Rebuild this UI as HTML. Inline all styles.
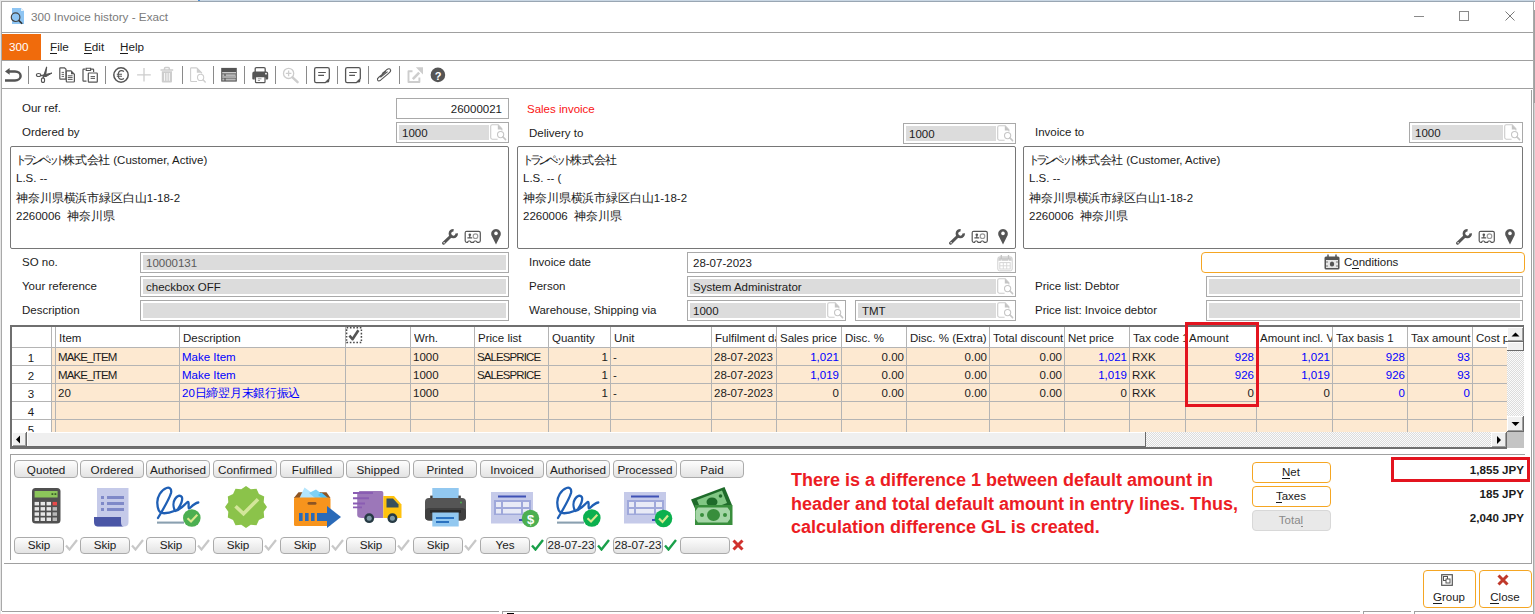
<!DOCTYPE html>
<html><head><meta charset="utf-8"><style>
html,body{margin:0;padding:0;}
body{width:1535px;height:614px;overflow:hidden;position:relative;background:#fff;font-family:"Liberation Sans",sans-serif;color:#1b1b1b;}
.a{position:absolute;}
.t{position:absolute;white-space:nowrap;line-height:20px;height:20px;}
span.c{display:inline-block;overflow:visible;text-align:left;}
u{text-decoration:none;border-bottom:1px solid currentColor;line-height:1;}
</style></head><body>
<div class="a" style="left:0px;top:0px;width:1535px;height:614px;background:#ffffff"></div>
<div class="a" style="left:0px;top:0px;width:198px;height:1px;background:#e9e9e9"></div>
<div class="a" style="left:198px;top:0px;width:2px;height:1px;background:#4a90d9"></div>
<div class="a" style="left:200px;top:0px;width:1335px;height:1px;background:#c9d7e4"></div>
<div class="a" style="left:0px;top:1px;width:200px;height:1px;background:#a9a9a9"></div>
<div class="a" style="left:200px;top:1px;width:1335px;height:1px;background:#99a6b3"></div>
<div class="a" style="left:0px;top:0px;width:1px;height:614px;background:#e6e6e6"></div>
<div class="a" style="left:1px;top:1px;width:1px;height:610px;background:#a9a9a9"></div>
<div class="a" style="left:1533px;top:1px;width:1px;height:613px;background:#a9a9a9"></div>
<div class="a" style="left:1534px;top:10px;width:1px;height:93px;background:#a0a0a0"></div>
<div class="a" style="left:1534px;top:103px;width:1px;height:511px;background:#d0d0d0"></div>
<svg class="a" style="left:10px;top:7px" width="16" height="19" viewBox="0 0 16 19"><path d="M2 1H11L14 4V17H2Z" fill="#8ec5f3"/><path d="M11 1V4H14" fill="#e6f2fc"/><circle cx="5.6" cy="10.2" r="4.3" fill="none" stroke="#444" stroke-width="1.2"/><path d="M8.7 13.4L12.2 16.8" stroke="#333" stroke-width="1.6"/></svg>
<div class="t" style="left:31px;top:7px;font-size:11.7px;color:#7a7a7a">300 Invoice history - Exact</div>
<div class="a" style="left:1414px;top:16px;width:10px;height:1px;background:#8a8a8a"></div>
<div class="a" style="left:1459px;top:11px;width:8px;height:8px;border:1px solid #8a8a8a"></div>
<svg class="a" style="left:1505px;top:11px" width="10" height="10" viewBox="0 0 10 10"><path d="M0.5 0.5L9.5 9.5M9.5 0.5L0.5 9.5" stroke="#7a7a7a" stroke-width="1"/></svg>
<div class="a" style="left:2px;top:32px;width:1531px;height:1px;background:#a0a0a0"></div>
<div class="a" style="left:2px;top:34px;width:39px;height:26px;background:#f06b0c"></div>
<div class="t" style="left:9px;top:37px;font-size:11.7px;color:#fff">300</div>
<div class="t" style="left:50px;top:37px;font-size:11.7px;"><u>F</u>ile</div>
<div class="t" style="left:84px;top:37px;font-size:11.7px;"><u>E</u>dit</div>
<div class="t" style="left:120px;top:37px;font-size:11.7px;"><u>H</u>elp</div>
<div class="a" style="left:2px;top:60px;width:1531px;height:1px;background:#a0a0a0"></div>
<div class="a" style="left:2px;top:88px;width:1531px;height:1px;background:#a0a0a0"></div>
<div class="a" style="left:28px;top:66px;width:1px;height:18px;background:#8a8a8a"></div>
<div class="a" style="left:105px;top:66px;width:1px;height:18px;background:#8a8a8a"></div>
<div class="a" style="left:182px;top:66px;width:1px;height:18px;background:#8a8a8a"></div>
<div class="a" style="left:213px;top:66px;width:1px;height:18px;background:#8a8a8a"></div>
<div class="a" style="left:244px;top:66px;width:1px;height:18px;background:#8a8a8a"></div>
<div class="a" style="left:275px;top:66px;width:1px;height:18px;background:#8a8a8a"></div>
<div class="a" style="left:306px;top:66px;width:1px;height:18px;background:#8a8a8a"></div>
<div class="a" style="left:337px;top:66px;width:1px;height:18px;background:#8a8a8a"></div>
<div class="a" style="left:368px;top:66px;width:1px;height:18px;background:#8a8a8a"></div>
<div class="a" style="left:399px;top:66px;width:1px;height:18px;background:#8a8a8a"></div>
<svg class="a" style="left:0;top:0" width="1535" height="100">
<path d="M9 71.4H15A5.6 4.5 0 0 1 15 80.4H5" fill="none" stroke="#555555" stroke-width="2.5"/>
<path d="M5 71.4L9.6 68V74.8Z" fill="#555555"/>
<ellipse cx="38.6" cy="75" rx="2.2" ry="1.5" fill="none" stroke="#555555" stroke-width="1.1"/>
<ellipse cx="43" cy="80.2" rx="1.6" ry="2.3" fill="none" stroke="#555555" stroke-width="1.1"/>
<path d="M43.2 77.6L46.6 67.2L45.8 73.5Z" fill="#555555" stroke="#555555" stroke-width="1.2" stroke-linejoin="round"/>
<path d="M40.8 75.6L52 73L46 76.6Z" fill="#555555" stroke="#555555" stroke-width="1" stroke-linejoin="round"/>
<path d="M60.5 67.8H64.5L66 69.3V79.2H60.5Q59.8 79.2 59.8 78.5V68.5Q59.8 67.8 60.5 67.8Z" fill="#fff" stroke="#555555" stroke-width="1.2"/>
<path d="M61.6 72.4H64M61.6 74.4H64M61.6 76.4H64" stroke="#555555" stroke-width="0.9"/>
<path d="M67 70.8H71L74.4 74.2V81.3Q74.4 82 73.7 82H67Q66.3 82 66.3 81.3V71.5Q66.3 70.8 67 70.8Z" fill="#fff" stroke="#555555" stroke-width="1.2"/>
<path d="M71 70.8V74.2H74.4" fill="#555555"/>
<path d="M67.8 75.8H72.6M67.8 77.6H72.6M67.8 79.4H72.6" stroke="#555555" stroke-width="1"/>
<path d="M85.5 69.2H83.6Q83 69.2 83 69.8V80.6Q83 81.2 83.6 81.2H86.5M91 69.2H93Q93.6 69.2 93.6 69.8V72" fill="none" stroke="#555555" stroke-width="1.2"/>
<path d="M86.2 68.3H90.6V70.5H86.2Z" fill="#fff" stroke="#555555" stroke-width="1.1"/>
<path d="M89 73H96.6Q97.3 73 97.3 73.7V81.5Q97.3 82.2 96.6 82.2H89Q88.3 82.2 88.3 81.5V73.7Q88.3 73 89 73Z" fill="#fff" stroke="#555555" stroke-width="1.2"/>
<path d="M90.6 76.6H95M90.6 78.4H95" stroke="#555555" stroke-width="1"/>
<circle cx="121" cy="75" r="7.2" fill="none" stroke="#555555" stroke-width="1.5"/>
<path d="M124 71.5Q122.8 70.6 121.6 70.6Q118.2 70.6 118.2 75Q118.2 79.4 121.6 79.4Q122.8 79.4 124 78.5M116.8 74.2H122M116.8 76.2H122" fill="none" stroke="#555555" stroke-width="1.1"/>
<path d="M144 67.9V81.6M137.1 74.8H150.8" stroke="#cdcdcd" stroke-width="1.3"/>
<path d="M160.5 69.9H173.2M164.5 69.9V68.4Q164.5 67.4 165.5 67.4H168.3Q169.3 67.4 169.3 68.4V69.9" fill="none" stroke="#cdcdcd" stroke-width="1.5"/>
<path d="M161.8 71.3H172V81.6Q172 82.6 171 82.6H162.8Q161.8 82.6 161.8 81.6Z" fill="#cdcdcd"/>
<path d="M164.6 73V80.8M167 73V80.8M169.3 73V80.8" stroke="#fff" stroke-width="0.9"/>
<path d="M196.8 67.9H191.3Q190.6 67.9 190.6 68.6V80.8Q190.6 81.5 191.3 81.5H197M196.8 67.9L201.6 72.7V73.5" fill="none" stroke="#cdcdcd" stroke-width="1.1"/>
<path d="M196.8 67.9V72.7H201.6Z" fill="#cdcdcd"/>
<circle cx="200.6" cy="77.4" r="3.1" fill="#fff" stroke="#cdcdcd" stroke-width="1.1"/>
<path d="M202.8 79.6L205.6 82.4" stroke="#cdcdcd" stroke-width="1.4"/>
<rect x="221.2" y="67.9" width="15.6" height="13.7" fill="#555555"/>
<path d="M222.2 72.8H236M222.2 77H236" stroke="#fff" stroke-width="1"/>
<path d="M222.3 74.2H224.4V75.9H222.3ZM225.6 74.2H235.7V75.9H225.6ZM222.3 78.5H224.4V80.6H222.3ZM225.6 78.5H235.7V80.6H225.6Z" fill="#b9b9b9"/>
<path d="M255.2 72V68.8Q255.2 67.6 256.4 67.6H264Q265.2 67.6 265.2 68.8V72" fill="none" stroke="#555555" stroke-width="1.3"/>
<path d="M254.2 71.5H266.2Q268.2 71.5 268.2 73.5V78.4Q268.2 79.4 267.2 79.4H265.6V77.5H254.8V79.4H253.2Q252.3 79.4 252.3 78.4V73.5Q252.3 71.5 254.2 71.5Z" fill="#555555"/>
<circle cx="266" cy="73.7" r="0.9" fill="#fff"/>
<path d="M255.5 76.7H265V81.9Q265 82.7 264.2 82.7H256.3Q255.5 82.7 255.5 81.9Z" fill="#fff" stroke="#555555" stroke-width="1.2"/>
<path d="M257.8 78.8H261.5M257.8 80.5H260" stroke="#9a9a9a" stroke-width="1"/>
<circle cx="288.6" cy="73.4" r="5.1" fill="none" stroke="#cdcdcd" stroke-width="1.3"/>
<path d="M288.6 70.6V76.2M285.8 73.4H291.4" stroke="#cdcdcd" stroke-width="1.3"/>
<path d="M292.5 77.3L297.6 82.2" stroke="#cdcdcd" stroke-width="2.4" stroke-linecap="round"/>
<path d="M316.2 67.6H327.6Q329.3 67.6 329.3 69.3V78.6L325.3 82.6H316.2Q314.6 82.6 314.6 80.9V69.3Q314.6 67.6 316.2 67.6Z" fill="none" stroke="#555555" stroke-width="1.3"/>
<path d="M329.3 78.6L325.3 82.6H327.6Q329.3 82.6 329.3 80.9Z" fill="#555555"/>
<path d="M318.2 72.5H325.8M318.2 75.4H324" stroke="#555555" stroke-width="1.2"/><path d="M347.2 67.6H358.6Q360.3 67.6 360.3 69.3V78.6L356.3 82.6H347.2Q345.6 82.6 345.6 80.9V69.3Q345.6 67.6 347.2 67.6Z" fill="none" stroke="#555555" stroke-width="1.3"/>
<path d="M360.3 78.6L356.3 82.6H358.6Q360.3 82.6 360.3 80.9Z" fill="#555555"/>
<path d="M349.2 72.5H356.8M349.2 75.4H355" stroke="#555555" stroke-width="1.2"/>
<path d="M382 73.6L386.6 69.8Q389.4 67.8 390.4 69.6Q391.4 71.2 388.6 73.4L380.6 80.2Q378.6 81.6 377.6 80.2Q376.8 78.8 378.8 77.2L386 71.4M380.4 77.4L387.6 71.6" fill="none" stroke="#555555" stroke-width="1.1" stroke-linejoin="round"/>
<path d="M412.5 71.3H408.5V82H419.4V77.5" fill="none" stroke="#cdcdcd" stroke-width="1.9" stroke-linejoin="round"/>
<path d="M412.8 79.2L419.2 72.6" stroke="#cdcdcd" stroke-width="2.6"/>
<path d="M415.8 67.2H423V74.4Z" fill="#cdcdcd"/>
<circle cx="437.9" cy="74.9" r="7.3" fill="#555555"/>
</svg>
<div class="t" style="left:238px;width:400px;text-align:center;top:66px;font-size:11px;color:#fff;font-weight:bold">?</div>
<div class="t" style="left:22px;top:98px;font-size:11.5px;">Our ref.</div>
<div class="t" style="left:22px;top:122px;font-size:11.5px;">Ordered by</div>
<div class="a" style="left:396px;top:98px;width:111px;height:19px;border:1px solid #a9a9a9;background:#fff"></div>
<div class="t" style="left:102px;width:400px;text-align:right;top:99px;font-size:11.5px;">26000021</div>
<div class="a" style="left:396px;top:122px;width:111px;height:19px;border:1px solid #a9a9a9;background:#fff"></div>
<div class="a" style="left:399px;top:125px;width:90px;height:15px;background:#dcdcdc"></div>
<svg class="a" style="left:489px;top:123px" width="18" height="18" viewBox="0 0 18 18"><path d="M12.9 7.6V5.6L9.2 1.7H3.3Q1.7 1.7 1.7 3.3V14.6Q1.7 16.2 3.3 16.2H8.6" fill="none" stroke="#cbcbcb" stroke-width="1.1"/><path d="M8.8 1.6L13 5.9V6.5H8.8Z" fill="#c4c4c4"/><circle cx="11.6" cy="11.6" r="3.1" fill="#fff" stroke="#c6c6c6" stroke-width="1.1"/><path d="M13.9 13.9L16.6 16.6" stroke="#c6c6c6" stroke-width="1.5" stroke-linecap="round"/></svg>
<div class="t" style="left:402px;top:123px;font-size:11.5px;">1000</div>
<div class="t" style="left:527px;top:99px;font-size:11.5px;color:#fa1414">Sales invoice</div>
<div class="t" style="left:529px;top:123px;font-size:11.5px;">Delivery to</div>
<div class="a" style="left:903px;top:123px;width:111px;height:19px;border:1px solid #a9a9a9;background:#fff"></div>
<div class="a" style="left:906px;top:126px;width:90px;height:15px;background:#dcdcdc"></div>
<svg class="a" style="left:996px;top:124px" width="18" height="18" viewBox="0 0 18 18"><path d="M12.9 7.6V5.6L9.2 1.7H3.3Q1.7 1.7 1.7 3.3V14.6Q1.7 16.2 3.3 16.2H8.6" fill="none" stroke="#cbcbcb" stroke-width="1.1"/><path d="M8.8 1.6L13 5.9V6.5H8.8Z" fill="#c4c4c4"/><circle cx="11.6" cy="11.6" r="3.1" fill="#fff" stroke="#c6c6c6" stroke-width="1.1"/><path d="M13.9 13.9L16.6 16.6" stroke="#c6c6c6" stroke-width="1.5" stroke-linecap="round"/></svg>
<div class="t" style="left:909px;top:124px;font-size:11.5px;">1000</div>
<div class="t" style="left:1035px;top:122px;font-size:11.5px;">Invoice to</div>
<div class="a" style="left:1409px;top:122px;width:112px;height:19px;border:1px solid #a9a9a9;background:#fff"></div>
<div class="a" style="left:1412px;top:125px;width:91px;height:15px;background:#dcdcdc"></div>
<svg class="a" style="left:1503px;top:123px" width="18" height="18" viewBox="0 0 18 18"><path d="M12.9 7.6V5.6L9.2 1.7H3.3Q1.7 1.7 1.7 3.3V14.6Q1.7 16.2 3.3 16.2H8.6" fill="none" stroke="#cbcbcb" stroke-width="1.1"/><path d="M8.8 1.6L13 5.9V6.5H8.8Z" fill="#c4c4c4"/><circle cx="11.6" cy="11.6" r="3.1" fill="#fff" stroke="#c6c6c6" stroke-width="1.1"/><path d="M13.9 13.9L16.6 16.6" stroke="#c6c6c6" stroke-width="1.5" stroke-linecap="round"/></svg>
<div class="t" style="left:1415px;top:123px;font-size:11.5px;">1000</div>
<div class="a" style="left:10px;top:146px;width:497px;height:101px;border:1px solid #767676;border-radius:2px;background:#fff"></div>
<div class="t" style="left:16px;top:150px;font-size:11.5px;"><span style="margin-left:-1.5px"></span><span class="c" style="width:8.15px">ト</span><span class="c" style="width:8.15px">ラ</span><span class="c" style="width:8.15px">ン</span><span class="c" style="width:8.15px">ペ</span><span class="c" style="width:8.15px">ッ</span><span class="c" style="width:8.15px">ト</span><span class="c" style="width:11.7px">株</span><span class="c" style="width:11.7px">式</span><span class="c" style="width:11.7px">会</span><span class="c" style="width:11.7px">社</span> (Customer, Active)</div>
<div class="t" style="left:16px;top:168px;font-size:11.5px;">L.S. --</div>
<div class="t" style="left:16px;top:187.5px;font-size:11.5px;"><span class="c" style="width:11.9px">神</span><span class="c" style="width:11.9px">奈</span><span class="c" style="width:11.9px">川</span><span class="c" style="width:11.9px">県</span><span class="c" style="width:11.9px">横</span><span class="c" style="width:11.9px">浜</span><span class="c" style="width:11.9px">市</span><span class="c" style="width:11.9px">緑</span><span class="c" style="width:11.9px">区</span><span class="c" style="width:11.9px">白</span><span class="c" style="width:11.9px">山</span>1-18-2</div>
<div class="t" style="left:16px;top:206px;font-size:11.5px;">2260006&nbsp; <span class="c" style="width:11.9px">神</span><span class="c" style="width:11.9px">奈</span><span class="c" style="width:11.9px">川</span><span class="c" style="width:11.9px">県</span></div>
<svg class="a" style="left:442px;top:228px" width="17" height="17" viewBox="0 0 17 17"><path d="M14.69 5.3A3.4 3.4 0 1 1 11.6 2.21" fill="none" stroke="#555" stroke-width="2.6"/><path d="M1.6 15.2L9 8" stroke="#555" stroke-width="3" stroke-linecap="round"/><circle cx="2.1" cy="14.7" r="0.7" fill="#fff"/></svg>
<svg class="a" style="left:464px;top:230px" width="18" height="14" viewBox="0 0 18 14"><path d="M2.7 1.3H14.8Q16.3 1.3 16.3 2.8V10.8Q16.3 12.3 14.8 12.3H13.2Q12.7 11 11.8 11H10.8Q10 11 9.6 12.3H7Q6.6 11 5.8 11H4.8Q4 11 3.6 12.3H2.7Q1.2 12.3 1.2 10.8V2.8Q1.2 1.3 2.7 1.3Z" fill="none" stroke="#555" stroke-width="1.2"/><circle cx="5.8" cy="4.8" r="1.3" fill="#555"/><path d="M5.2 5.5H6.4V7.2H8.2V8.4H3.4V7.2H5.2Z" fill="#555"/><circle cx="11.5" cy="6.2" r="2.3" fill="none" stroke="#9a9a9a" stroke-width="1.1"/></svg>
<svg class="a" style="left:490px;top:228px" width="12" height="17" viewBox="0 0 12 17"><path d="M6 16.5L1.5 7.5A4.8 4.8 0 1 1 10.5 7.5Z" fill="#555"/><circle cx="6" cy="5.4" r="1.8" fill="#fff"/></svg>
<div class="a" style="left:517px;top:146px;width:497px;height:101px;border:1px solid #767676;border-radius:2px;background:#fff"></div>
<div class="t" style="left:523px;top:150px;font-size:11.5px;"><span style="margin-left:-1.5px"></span><span class="c" style="width:8.15px">ト</span><span class="c" style="width:8.15px">ラ</span><span class="c" style="width:8.15px">ン</span><span class="c" style="width:8.15px">ペ</span><span class="c" style="width:8.15px">ッ</span><span class="c" style="width:8.15px">ト</span><span class="c" style="width:11.7px">株</span><span class="c" style="width:11.7px">式</span><span class="c" style="width:11.7px">会</span><span class="c" style="width:11.7px">社</span></div>
<div class="t" style="left:523px;top:168px;font-size:11.5px;">L.S. -- (</div>
<div class="t" style="left:523px;top:187.5px;font-size:11.5px;"><span class="c" style="width:11.9px">神</span><span class="c" style="width:11.9px">奈</span><span class="c" style="width:11.9px">川</span><span class="c" style="width:11.9px">県</span><span class="c" style="width:11.9px">横</span><span class="c" style="width:11.9px">浜</span><span class="c" style="width:11.9px">市</span><span class="c" style="width:11.9px">緑</span><span class="c" style="width:11.9px">区</span><span class="c" style="width:11.9px">白</span><span class="c" style="width:11.9px">山</span>1-18-2</div>
<div class="t" style="left:523px;top:206px;font-size:11.5px;">2260006&nbsp; <span class="c" style="width:11.9px">神</span><span class="c" style="width:11.9px">奈</span><span class="c" style="width:11.9px">川</span><span class="c" style="width:11.9px">県</span></div>
<svg class="a" style="left:949px;top:228px" width="17" height="17" viewBox="0 0 17 17"><path d="M14.69 5.3A3.4 3.4 0 1 1 11.6 2.21" fill="none" stroke="#555" stroke-width="2.6"/><path d="M1.6 15.2L9 8" stroke="#555" stroke-width="3" stroke-linecap="round"/><circle cx="2.1" cy="14.7" r="0.7" fill="#fff"/></svg>
<svg class="a" style="left:971px;top:230px" width="18" height="14" viewBox="0 0 18 14"><path d="M2.7 1.3H14.8Q16.3 1.3 16.3 2.8V10.8Q16.3 12.3 14.8 12.3H13.2Q12.7 11 11.8 11H10.8Q10 11 9.6 12.3H7Q6.6 11 5.8 11H4.8Q4 11 3.6 12.3H2.7Q1.2 12.3 1.2 10.8V2.8Q1.2 1.3 2.7 1.3Z" fill="none" stroke="#555" stroke-width="1.2"/><circle cx="5.8" cy="4.8" r="1.3" fill="#555"/><path d="M5.2 5.5H6.4V7.2H8.2V8.4H3.4V7.2H5.2Z" fill="#555"/><circle cx="11.5" cy="6.2" r="2.3" fill="none" stroke="#9a9a9a" stroke-width="1.1"/></svg>
<svg class="a" style="left:997px;top:228px" width="12" height="17" viewBox="0 0 12 17"><path d="M6 16.5L1.5 7.5A4.8 4.8 0 1 1 10.5 7.5Z" fill="#555"/><circle cx="6" cy="5.4" r="1.8" fill="#fff"/></svg>
<div class="a" style="left:1023px;top:146px;width:498px;height:101px;border:1px solid #767676;border-radius:2px;background:#fff"></div>
<div class="t" style="left:1029px;top:150px;font-size:11.5px;"><span style="margin-left:-1.5px"></span><span class="c" style="width:8.15px">ト</span><span class="c" style="width:8.15px">ラ</span><span class="c" style="width:8.15px">ン</span><span class="c" style="width:8.15px">ペ</span><span class="c" style="width:8.15px">ッ</span><span class="c" style="width:8.15px">ト</span><span class="c" style="width:11.7px">株</span><span class="c" style="width:11.7px">式</span><span class="c" style="width:11.7px">会</span><span class="c" style="width:11.7px">社</span> (Customer, Active)</div>
<div class="t" style="left:1029px;top:168px;font-size:11.5px;">L.S. --</div>
<div class="t" style="left:1029px;top:187.5px;font-size:11.5px;"><span class="c" style="width:11.9px">神</span><span class="c" style="width:11.9px">奈</span><span class="c" style="width:11.9px">川</span><span class="c" style="width:11.9px">県</span><span class="c" style="width:11.9px">横</span><span class="c" style="width:11.9px">浜</span><span class="c" style="width:11.9px">市</span><span class="c" style="width:11.9px">緑</span><span class="c" style="width:11.9px">区</span><span class="c" style="width:11.9px">白</span><span class="c" style="width:11.9px">山</span>1-18-2</div>
<div class="t" style="left:1029px;top:206px;font-size:11.5px;">2260006&nbsp; <span class="c" style="width:11.9px">神</span><span class="c" style="width:11.9px">奈</span><span class="c" style="width:11.9px">川</span><span class="c" style="width:11.9px">県</span></div>
<svg class="a" style="left:1456px;top:228px" width="17" height="17" viewBox="0 0 17 17"><path d="M14.69 5.3A3.4 3.4 0 1 1 11.6 2.21" fill="none" stroke="#555" stroke-width="2.6"/><path d="M1.6 15.2L9 8" stroke="#555" stroke-width="3" stroke-linecap="round"/><circle cx="2.1" cy="14.7" r="0.7" fill="#fff"/></svg>
<svg class="a" style="left:1478px;top:230px" width="18" height="14" viewBox="0 0 18 14"><path d="M2.7 1.3H14.8Q16.3 1.3 16.3 2.8V10.8Q16.3 12.3 14.8 12.3H13.2Q12.7 11 11.8 11H10.8Q10 11 9.6 12.3H7Q6.6 11 5.8 11H4.8Q4 11 3.6 12.3H2.7Q1.2 12.3 1.2 10.8V2.8Q1.2 1.3 2.7 1.3Z" fill="none" stroke="#555" stroke-width="1.2"/><circle cx="5.8" cy="4.8" r="1.3" fill="#555"/><path d="M5.2 5.5H6.4V7.2H8.2V8.4H3.4V7.2H5.2Z" fill="#555"/><circle cx="11.5" cy="6.2" r="2.3" fill="none" stroke="#9a9a9a" stroke-width="1.1"/></svg>
<svg class="a" style="left:1504px;top:228px" width="12" height="17" viewBox="0 0 12 17"><path d="M6 16.5L1.5 7.5A4.8 4.8 0 1 1 10.5 7.5Z" fill="#555"/><circle cx="6" cy="5.4" r="1.8" fill="#fff"/></svg>
<div class="t" style="left:22px;top:252px;font-size:11.5px;">SO no.</div>
<div class="t" style="left:22px;top:276px;font-size:11.5px;">Your reference</div>
<div class="t" style="left:22px;top:300px;font-size:11.5px;">Description</div>
<div class="a" style="left:140px;top:252px;width:367px;height:19px;border:1px solid #a9a9a9;background:#fff"></div>
<div class="a" style="left:143px;top:255px;width:363px;height:15px;background:#dcdcdc"></div>
<div class="t" style="left:146px;top:253px;font-size:11.5px;color:#5a5a5a">10000131</div>
<div class="a" style="left:140px;top:276px;width:367px;height:19px;border:1px solid #a9a9a9;background:#fff"></div>
<div class="a" style="left:143px;top:279px;width:363px;height:15px;background:#dcdcdc"></div>
<div class="t" style="left:146px;top:277px;font-size:11.5px;">checkbox OFF</div>
<div class="a" style="left:140px;top:300px;width:367px;height:19px;border:1px solid #a9a9a9;background:#fff"></div>
<div class="a" style="left:143px;top:303px;width:363px;height:15px;background:#dcdcdc"></div>
<div class="t" style="left:529px;top:252px;font-size:11.5px;">Invoice date</div>
<div class="t" style="left:529px;top:276px;font-size:11.5px;">Person</div>
<div class="t" style="left:529px;top:300px;font-size:11.5px;">Warehouse, Shipping via</div>
<div class="a" style="left:687px;top:252px;width:327px;height:19px;border:1px solid #a9a9a9;background:#fff"></div>
<svg class="a" style="left:996px;top:254px" width="18" height="18" viewBox="0 0 18 18"><rect x="1.8" y="2.8" width="14.4" height="14" rx="1.8" fill="#fff" stroke="#d0d0d0" stroke-width="1"/><path d="M2.3 3.3H15.7V6.8H2.3Z" fill="#cdcdcd"/><path d="M5.3 1V5.5M12.5 1V5.5" stroke="#c4c4c4" stroke-width="1.3"/><path d="M5.3 5.5V7M12.5 5.5V7" stroke="#fff" stroke-width="0.6"/><rect x="3.8" y="8.6" width="10.4" height="6.4" fill="none" stroke="#d6d6d6" stroke-width="1"/><path d="M3.8 11.8H14.2M7.3 8.6V15M10.7 8.6V15" stroke="#d6d6d6" stroke-width="0.9"/></svg>
<div class="t" style="left:693px;top:253px;font-size:11.5px;">28-07-2023</div>
<div class="a" style="left:687px;top:276px;width:327px;height:19px;border:1px solid #a9a9a9;background:#fff"></div>
<div class="a" style="left:690px;top:279px;width:306px;height:15px;background:#dcdcdc"></div>
<svg class="a" style="left:996px;top:277px" width="18" height="18" viewBox="0 0 18 18"><path d="M12.9 7.6V5.6L9.2 1.7H3.3Q1.7 1.7 1.7 3.3V14.6Q1.7 16.2 3.3 16.2H8.6" fill="none" stroke="#cbcbcb" stroke-width="1.1"/><path d="M8.8 1.6L13 5.9V6.5H8.8Z" fill="#c4c4c4"/><circle cx="11.6" cy="11.6" r="3.1" fill="#fff" stroke="#c6c6c6" stroke-width="1.1"/><path d="M13.9 13.9L16.6 16.6" stroke="#c6c6c6" stroke-width="1.5" stroke-linecap="round"/></svg>
<div class="t" style="left:693px;top:277px;font-size:11.5px;">System Administrator</div>
<div class="a" style="left:687px;top:300px;width:157px;height:19px;border:1px solid #a9a9a9;background:#fff"></div>
<div class="a" style="left:690px;top:303px;width:136px;height:15px;background:#dcdcdc"></div>
<svg class="a" style="left:826px;top:301px" width="18" height="18" viewBox="0 0 18 18"><path d="M12.9 7.6V5.6L9.2 1.7H3.3Q1.7 1.7 1.7 3.3V14.6Q1.7 16.2 3.3 16.2H8.6" fill="none" stroke="#cbcbcb" stroke-width="1.1"/><path d="M8.8 1.6L13 5.9V6.5H8.8Z" fill="#c4c4c4"/><circle cx="11.6" cy="11.6" r="3.1" fill="#fff" stroke="#c6c6c6" stroke-width="1.1"/><path d="M13.9 13.9L16.6 16.6" stroke="#c6c6c6" stroke-width="1.5" stroke-linecap="round"/></svg>
<div class="t" style="left:693px;top:301px;font-size:11.5px;">1000</div>
<div class="a" style="left:855px;top:300px;width:159px;height:19px;border:1px solid #a9a9a9;background:#fff"></div>
<div class="a" style="left:858px;top:303px;width:138px;height:15px;background:#dcdcdc"></div>
<svg class="a" style="left:996px;top:301px" width="18" height="18" viewBox="0 0 18 18"><path d="M12.9 7.6V5.6L9.2 1.7H3.3Q1.7 1.7 1.7 3.3V14.6Q1.7 16.2 3.3 16.2H8.6" fill="none" stroke="#cbcbcb" stroke-width="1.1"/><path d="M8.8 1.6L13 5.9V6.5H8.8Z" fill="#c4c4c4"/><circle cx="11.6" cy="11.6" r="3.1" fill="#fff" stroke="#c6c6c6" stroke-width="1.1"/><path d="M13.9 13.9L16.6 16.6" stroke="#c6c6c6" stroke-width="1.5" stroke-linecap="round"/></svg>
<div class="t" style="left:862px;top:301px;font-size:11.5px;">TMT</div>
<div class="t" style="left:1035px;top:276px;font-size:11.5px;">Price list: Debtor</div>
<div class="t" style="left:1035px;top:300px;font-size:11.5px;">Price list: Invoice debtor</div>
<div class="a" style="left:1201px;top:252px;width:322px;height:19px;border:1px solid #f5a623;border-radius:4px;background:#fff"></div>
<svg class="a" style="left:1324px;top:254px" width="16" height="16" viewBox="0 0 16 16"><rect x="0.5" y="2.5" width="15" height="13" rx="1.5" fill="#555"/><path d="M4 0.5V3.5M12 0.5V3.5" stroke="#555" stroke-width="1.5"/><rect x="2" y="6" width="12" height="8" fill="#e6e6e6"/><ellipse cx="8" cy="10" rx="2.2" ry="2.6" fill="#555"/><path d="M2 8H4M12 8H14M2 12H4M12 12H14" stroke="#777"/></svg>
<div class="t" style="left:1344px;top:252px;font-size:11.5px;">C<u>o</u>nditions</div>
<div class="a" style="left:1206px;top:276px;width:315px;height:19px;border:1px solid #a9a9a9;background:#fff"></div>
<div class="a" style="left:1209px;top:279px;width:311px;height:15px;background:#dcdcdc"></div>
<div class="a" style="left:1206px;top:300px;width:315px;height:19px;border:1px solid #a9a9a9;background:#fff"></div>
<div class="a" style="left:1209px;top:303px;width:311px;height:15px;background:#dcdcdc"></div>
<div class="a" style="left:10px;top:325px;width:1514px;height:2px;background:#6f6f6f"></div>
<div class="a" style="left:10px;top:325px;width:2px;height:124px;background:#6f6f6f"></div>
<div class="a" style="left:10px;top:447px;width:1497px;height:2px;background:#6f6f6f"></div>
<div class="a" style="left:12px;top:327px;width:1495px;height:20px;background:#fff"></div>
<div class="a" style="left:52px;top:348px;width:1455px;height:84px;background:#fde9d1"></div>
<div class="a" style="left:12px;top:348px;width:39px;height:84px;background:#fff"></div>
<div class="a" style="left:51px;top:327px;width:1px;height:105px;background:#b4b4b4"></div>
<div class="a" style="left:55px;top:327px;width:1px;height:105px;background:#b4b4b4"></div>
<div class="a" style="left:179px;top:327px;width:1px;height:105px;background:#b4b4b4"></div>
<div class="a" style="left:345px;top:327px;width:1px;height:105px;background:#b4b4b4"></div>
<div class="a" style="left:410px;top:327px;width:1px;height:105px;background:#b4b4b4"></div>
<div class="a" style="left:474px;top:327px;width:1px;height:105px;background:#b4b4b4"></div>
<div class="a" style="left:548px;top:327px;width:1px;height:105px;background:#b4b4b4"></div>
<div class="a" style="left:610px;top:327px;width:1px;height:105px;background:#b4b4b4"></div>
<div class="a" style="left:711px;top:327px;width:1px;height:105px;background:#b4b4b4"></div>
<div class="a" style="left:776px;top:327px;width:1px;height:105px;background:#b4b4b4"></div>
<div class="a" style="left:841px;top:327px;width:1px;height:105px;background:#b4b4b4"></div>
<div class="a" style="left:906px;top:327px;width:1px;height:105px;background:#b4b4b4"></div>
<div class="a" style="left:989px;top:327px;width:1px;height:105px;background:#b4b4b4"></div>
<div class="a" style="left:1064px;top:327px;width:1px;height:105px;background:#b4b4b4"></div>
<div class="a" style="left:1129px;top:327px;width:1px;height:105px;background:#b4b4b4"></div>
<div class="a" style="left:1185px;top:327px;width:1px;height:105px;background:#b4b4b4"></div>
<div class="a" style="left:1256px;top:327px;width:1px;height:105px;background:#b4b4b4"></div>
<div class="a" style="left:1332px;top:327px;width:1px;height:105px;background:#b4b4b4"></div>
<div class="a" style="left:1407px;top:327px;width:1px;height:105px;background:#b4b4b4"></div>
<div class="a" style="left:1472px;top:327px;width:1px;height:105px;background:#b4b4b4"></div>
<div class="a" style="left:12px;top:347px;width:1495px;height:1px;background:#b4b4b4"></div>
<div class="a" style="left:12px;top:365px;width:1495px;height:1px;background:#b4b4b4"></div>
<div class="a" style="left:12px;top:383px;width:1495px;height:1px;background:#b4b4b4"></div>
<div class="a" style="left:12px;top:401px;width:1495px;height:1px;background:#b4b4b4"></div>
<div class="a" style="left:12px;top:419px;width:1495px;height:1px;background:#b4b4b4"></div>
<div class="t" style="left:59px;top:328px;width:120px;overflow:hidden;font-size:11.5px;">Item</div>
<div class="t" style="left:183px;top:328px;width:162px;overflow:hidden;font-size:11.5px;">Description</div>
<div class="t" style="left:414px;top:328px;width:60px;overflow:hidden;font-size:11.5px;">Wrh.</div>
<div class="t" style="left:478px;top:328px;width:70px;overflow:hidden;font-size:11.5px;">Price list</div>
<div class="t" style="left:552px;top:328px;width:58px;overflow:hidden;font-size:11.5px;">Quantity</div>
<div class="t" style="left:614px;top:328px;width:97px;overflow:hidden;font-size:11.5px;">Unit</div>
<div class="t" style="left:715px;top:328px;width:61px;overflow:hidden;font-size:11.5px;">Fulfilment date</div>
<div class="t" style="left:780px;top:328px;width:61px;overflow:hidden;font-size:11.5px;">Sales price</div>
<div class="t" style="left:845px;top:328px;width:61px;overflow:hidden;font-size:11.5px;">Disc. %</div>
<div class="t" style="left:910px;top:328px;width:79px;overflow:hidden;font-size:11.5px;">Disc. % (Extra)</div>
<div class="t" style="left:993px;top:328px;width:71px;overflow:hidden;font-size:11.5px;">Total discount</div>
<div class="t" style="left:1068px;top:328px;width:61px;overflow:hidden;font-size:11.5px;">Net price</div>
<div class="t" style="left:1133px;top:328px;width:52px;overflow:hidden;font-size:11.5px;">Tax code 1</div>
<div class="t" style="left:1189px;top:328px;width:67px;overflow:hidden;font-size:11.5px;">Amount</div>
<div class="t" style="left:1260px;top:328px;width:72px;overflow:hidden;font-size:11.5px;">Amount incl. VAT</div>
<div class="t" style="left:1336px;top:328px;width:71px;overflow:hidden;font-size:11.5px;">Tax basis 1</div>
<div class="t" style="left:1411px;top:328px;width:61px;overflow:hidden;font-size:11.5px;">Tax amount</div>
<div class="t" style="left:1476px;top:328px;width:31px;overflow:hidden;font-size:11.5px;">Cost price</div>
<svg class="a" style="left:345px;top:326px" width="18" height="18" viewBox="0 0 18 18"><rect x="1.6" y="1.8" width="14.8" height="14.8" fill="none" stroke="#4a4a4a" stroke-width="1.5" stroke-dasharray="1.6 1.7"/><path d="M4.4 9.7L7.5 13.2L13.4 4.3" fill="none" stroke="#555" stroke-width="2.6" stroke-linejoin="round"/></svg>
<div class="t" style="left:-169px;width:400px;text-align:center;top:348px;font-size:11.5px;">1</div>
<div class="t" style="left:-169px;width:400px;text-align:center;top:366px;font-size:11.5px;">2</div>
<div class="t" style="left:-169px;width:400px;text-align:center;top:384px;font-size:11.5px;">3</div>
<div class="t" style="left:-169px;width:400px;text-align:center;top:402px;font-size:11.5px;">4</div>
<div class="t" style="left:-169px;width:400px;text-align:center;top:420px;font-size:11.5px;">5</div>
<div class="t" style="left:58px;top:347px;font-size:11.5px;;letter-spacing:-0.9px">MAKE_ITEM</div>
<div class="t" style="left:182px;top:347px;font-size:11.5px;color:#0000ff">Make Item</div>
<div class="t" style="left:413px;top:347px;font-size:11.5px;">1000</div>
<div class="t" style="left:477px;top:347px;font-size:11.5px;;letter-spacing:-0.9px">SALESPRICE</div>
<div class="t" style="left:208px;width:400px;text-align:right;top:347px;font-size:11.5px;">1</div>
<div class="t" style="left:613px;top:347px;font-size:11.5px;">-</div>
<div class="t" style="left:714px;top:347px;font-size:11.5px;">28-07-2023</div>
<div class="t" style="left:439px;width:400px;text-align:right;top:347px;font-size:11.5px;color:#0000ff">1,021</div>
<div class="t" style="left:504px;width:400px;text-align:right;top:347px;font-size:11.5px;">0.00</div>
<div class="t" style="left:587px;width:400px;text-align:right;top:347px;font-size:11.5px;">0.00</div>
<div class="t" style="left:662px;width:400px;text-align:right;top:347px;font-size:11.5px;">0.00</div>
<div class="t" style="left:727px;width:400px;text-align:right;top:347px;font-size:11.5px;color:#0000ff">1,021</div>
<div class="t" style="left:1132px;top:347px;font-size:11.5px;">RXK</div>
<div class="t" style="left:854px;width:400px;text-align:right;top:347px;font-size:11.5px;color:#0000ff">928</div>
<div class="t" style="left:930px;width:400px;text-align:right;top:347px;font-size:11.5px;color:#0000ff">1,021</div>
<div class="t" style="left:1005px;width:400px;text-align:right;top:347px;font-size:11.5px;color:#0000ff">928</div>
<div class="t" style="left:1070px;width:400px;text-align:right;top:347px;font-size:11.5px;color:#0000ff">93</div>
<div class="t" style="left:58px;top:365px;font-size:11.5px;;letter-spacing:-0.9px">MAKE_ITEM</div>
<div class="t" style="left:182px;top:365px;font-size:11.5px;color:#0000ff">Make Item</div>
<div class="t" style="left:413px;top:365px;font-size:11.5px;">1000</div>
<div class="t" style="left:477px;top:365px;font-size:11.5px;;letter-spacing:-0.9px">SALESPRICE</div>
<div class="t" style="left:208px;width:400px;text-align:right;top:365px;font-size:11.5px;">1</div>
<div class="t" style="left:613px;top:365px;font-size:11.5px;">-</div>
<div class="t" style="left:714px;top:365px;font-size:11.5px;">28-07-2023</div>
<div class="t" style="left:439px;width:400px;text-align:right;top:365px;font-size:11.5px;color:#0000ff">1,019</div>
<div class="t" style="left:504px;width:400px;text-align:right;top:365px;font-size:11.5px;">0.00</div>
<div class="t" style="left:587px;width:400px;text-align:right;top:365px;font-size:11.5px;">0.00</div>
<div class="t" style="left:662px;width:400px;text-align:right;top:365px;font-size:11.5px;">0.00</div>
<div class="t" style="left:727px;width:400px;text-align:right;top:365px;font-size:11.5px;color:#0000ff">1,019</div>
<div class="t" style="left:1132px;top:365px;font-size:11.5px;">RXK</div>
<div class="t" style="left:854px;width:400px;text-align:right;top:365px;font-size:11.5px;color:#0000ff">926</div>
<div class="t" style="left:930px;width:400px;text-align:right;top:365px;font-size:11.5px;color:#0000ff">1,019</div>
<div class="t" style="left:1005px;width:400px;text-align:right;top:365px;font-size:11.5px;color:#0000ff">926</div>
<div class="t" style="left:1070px;width:400px;text-align:right;top:365px;font-size:11.5px;color:#0000ff">93</div>
<div class="t" style="left:58px;top:383px;font-size:11.5px;">20</div>
<div class="t" style="left:182px;top:383px;font-size:11.5px;color:#0000ff">20<span class="c" style="width:11.7px">日</span><span class="c" style="width:11.7px">締</span><span class="c" style="width:11.7px">翌</span><span class="c" style="width:11.7px">月</span><span class="c" style="width:11.7px">末</span><span class="c" style="width:11.7px">銀</span><span class="c" style="width:11.7px">行</span><span class="c" style="width:11.7px">振</span><span class="c" style="width:11.7px">込</span></div>
<div class="t" style="left:413px;top:383px;font-size:11.5px;">1000</div>
<div class="t" style="left:208px;width:400px;text-align:right;top:383px;font-size:11.5px;">1</div>
<div class="t" style="left:613px;top:383px;font-size:11.5px;">-</div>
<div class="t" style="left:714px;top:383px;font-size:11.5px;">28-07-2023</div>
<div class="t" style="left:439px;width:400px;text-align:right;top:383px;font-size:11.5px;">0</div>
<div class="t" style="left:504px;width:400px;text-align:right;top:383px;font-size:11.5px;">0.00</div>
<div class="t" style="left:587px;width:400px;text-align:right;top:383px;font-size:11.5px;">0.00</div>
<div class="t" style="left:662px;width:400px;text-align:right;top:383px;font-size:11.5px;">0.00</div>
<div class="t" style="left:727px;width:400px;text-align:right;top:383px;font-size:11.5px;">0</div>
<div class="t" style="left:1132px;top:383px;font-size:11.5px;">RXK</div>
<div class="t" style="left:854px;width:400px;text-align:right;top:383px;font-size:11.5px;">0</div>
<div class="t" style="left:930px;width:400px;text-align:right;top:383px;font-size:11.5px;">0</div>
<div class="t" style="left:1005px;width:400px;text-align:right;top:383px;font-size:11.5px;color:#0000ff">0</div>
<div class="t" style="left:1070px;width:400px;text-align:right;top:383px;font-size:11.5px;color:#0000ff">0</div>
<div class="a" style="left:1507px;top:327px;width:17px;height:105px;background:repeating-conic-gradient(#dcdcdc 0 25%,#fbfbfb 0 50%) 0 0/2px 2px"></div>
<div class="a" style="left:1507px;top:327px;width:17px;height:15px;background:#f0f0f0;box-shadow:inset -1px -1px #6a6a6a,inset 1px 1px #fff,inset -2px -2px #a0a0a0"></div>
<svg class="a" style="left:0;top:0" width="1535" height="614"><polygon points="1511.5,336.5 1519.5,336.5 1515.5,332.5" fill="#000"/></svg>
<div class="a" style="left:1507px;top:342px;width:17px;height:9px;background:#f0f0f0;box-shadow:inset -1px -1px #6a6a6a,inset 1px 1px #fff"></div>
<div class="a" style="left:1507px;top:416px;width:17px;height:16px;background:#f0f0f0;box-shadow:inset -1px -1px #6a6a6a,inset 1px 1px #fff,inset -2px -2px #a0a0a0"></div>
<svg class="a" style="left:0;top:0" width="1535" height="614"><polygon points="1511.5,422.0 1519.5,422.0 1515.5,426.0" fill="#000"/></svg>
<div class="a" style="left:12px;top:432px;width:1495px;height:15px;background:repeating-conic-gradient(#dcdcdc 0 25%,#fbfbfb 0 50%) 0 0/2px 2px"></div>
<div class="a" style="left:12px;top:432px;width:15px;height:15px;background:#f0f0f0;box-shadow:inset -1px -1px #6a6a6a,inset 1px 1px #fff,inset -2px -2px #a0a0a0"></div>
<svg class="a" style="left:0;top:0" width="1535" height="614"><polygon points="20.0,435.5 20.0,443.5 16.0,439.5" fill="#000"/></svg>
<div class="a" style="left:27px;top:432px;width:1119px;height:15px;background:#efefef;box-shadow:inset -1px -1px #6a6a6a,inset 1px 1px #fff"></div>
<div class="a" style="left:1491px;top:432px;width:16px;height:16px;background:#f0f0f0;box-shadow:inset -1px -1px #6a6a6a,inset 1px 1px #fff,inset -2px -2px #a0a0a0"></div>
<svg class="a" style="left:0;top:0" width="1535" height="614"><polygon points="1497.0,436.0 1497.0,444.0 1501.0,440.0" fill="#000"/></svg>
<div class="a" style="left:1507px;top:432px;width:17px;height:16px;background:#c4c4c4"></div>
<div class="a" style="left:1185px;top:322px;width:68px;height:79px;border:3px solid #e3141f"></div>
<div class="a" style="left:10px;top:454px;width:1515px;height:1px;background:#a0a0a0"></div>
<div class="a" style="left:10px;top:454px;width:1px;height:106px;background:#a0a0a0"></div>
<div class="a" style="left:4px;top:563px;width:1528px;height:1px;background:#a0a0a0"></div>
<div class="a" style="left:1531px;top:90px;width:1px;height:474px;background:#a0a0a0"></div>
<div class="a" style="left:14px;top:460px;width:64px;height:18px;border:1px solid #ababab;border-radius:4px;background:linear-gradient(#fdfdfd,#e3e3e3);box-sizing:border-box"></div>
<div class="t" style="left:-154px;width:400px;text-align:center;top:460px;font-size:11.7px;">Quoted</div>
<div class="a" style="left:80px;top:460px;width:64px;height:18px;border:1px solid #ababab;border-radius:4px;background:linear-gradient(#fdfdfd,#e3e3e3);box-sizing:border-box"></div>
<div class="t" style="left:-88px;width:400px;text-align:center;top:460px;font-size:11.7px;">Ordered</div>
<div class="a" style="left:146px;top:460px;width:64px;height:18px;border:1px solid #ababab;border-radius:4px;background:linear-gradient(#fdfdfd,#e3e3e3);box-sizing:border-box"></div>
<div class="t" style="left:-22px;width:400px;text-align:center;top:460px;font-size:11.7px;">Authorised</div>
<div class="a" style="left:213px;top:460px;width:64px;height:18px;border:1px solid #ababab;border-radius:4px;background:linear-gradient(#fdfdfd,#e3e3e3);box-sizing:border-box"></div>
<div class="t" style="left:45px;width:400px;text-align:center;top:460px;font-size:11.7px;">Confirmed</div>
<div class="a" style="left:280px;top:460px;width:64px;height:18px;border:1px solid #ababab;border-radius:4px;background:linear-gradient(#fdfdfd,#e3e3e3);box-sizing:border-box"></div>
<div class="t" style="left:112px;width:400px;text-align:center;top:460px;font-size:11.7px;">Fulfilled</div>
<div class="a" style="left:346px;top:460px;width:64px;height:18px;border:1px solid #ababab;border-radius:4px;background:linear-gradient(#fdfdfd,#e3e3e3);box-sizing:border-box"></div>
<div class="t" style="left:178px;width:400px;text-align:center;top:460px;font-size:11.7px;">Shipped</div>
<div class="a" style="left:413px;top:460px;width:64px;height:18px;border:1px solid #ababab;border-radius:4px;background:linear-gradient(#fdfdfd,#e3e3e3);box-sizing:border-box"></div>
<div class="t" style="left:245px;width:400px;text-align:center;top:460px;font-size:11.7px;">Printed</div>
<div class="a" style="left:480px;top:460px;width:64px;height:18px;border:1px solid #ababab;border-radius:4px;background:linear-gradient(#fdfdfd,#e3e3e3);box-sizing:border-box"></div>
<div class="t" style="left:312px;width:400px;text-align:center;top:460px;font-size:11.7px;">Invoiced</div>
<div class="a" style="left:546px;top:460px;width:64px;height:18px;border:1px solid #ababab;border-radius:4px;background:linear-gradient(#fdfdfd,#e3e3e3);box-sizing:border-box"></div>
<div class="t" style="left:378px;width:400px;text-align:center;top:460px;font-size:11.7px;">Authorised</div>
<div class="a" style="left:613px;top:460px;width:64px;height:18px;border:1px solid #ababab;border-radius:4px;background:linear-gradient(#fdfdfd,#e3e3e3);box-sizing:border-box"></div>
<div class="t" style="left:445px;width:400px;text-align:center;top:460px;font-size:11.7px;">Processed</div>
<div class="a" style="left:680px;top:460px;width:64px;height:18px;border:1px solid #ababab;border-radius:4px;background:linear-gradient(#fdfdfd,#e3e3e3);box-sizing:border-box"></div>
<div class="t" style="left:512px;width:400px;text-align:center;top:460px;font-size:11.7px;">Paid</div>
<div class="a" style="left:14px;top:537px;width:50px;height:17px;border:1px solid #ababab;border-radius:4px;background:linear-gradient(#fdfdfd,#e3e3e3);box-sizing:border-box"></div>
<div class="t" style="left:-161px;width:400px;text-align:center;top:535px;font-size:11.7px;">Skip</div>
<svg class="a" style="left:65px;top:539px" width="13" height="12" viewBox="0 0 13 12"><path d="M1 6.5L4.5 10.5L12 1" fill="none" stroke="#c8c8c8" stroke-width="2.2"/></svg>
<div class="a" style="left:80px;top:537px;width:50px;height:17px;border:1px solid #ababab;border-radius:4px;background:linear-gradient(#fdfdfd,#e3e3e3);box-sizing:border-box"></div>
<div class="t" style="left:-95px;width:400px;text-align:center;top:535px;font-size:11.7px;">Skip</div>
<svg class="a" style="left:131px;top:539px" width="13" height="12" viewBox="0 0 13 12"><path d="M1 6.5L4.5 10.5L12 1" fill="none" stroke="#c8c8c8" stroke-width="2.2"/></svg>
<div class="a" style="left:146px;top:537px;width:50px;height:17px;border:1px solid #ababab;border-radius:4px;background:linear-gradient(#fdfdfd,#e3e3e3);box-sizing:border-box"></div>
<div class="t" style="left:-29px;width:400px;text-align:center;top:535px;font-size:11.7px;">Skip</div>
<svg class="a" style="left:197px;top:539px" width="13" height="12" viewBox="0 0 13 12"><path d="M1 6.5L4.5 10.5L12 1" fill="none" stroke="#c8c8c8" stroke-width="2.2"/></svg>
<div class="a" style="left:213px;top:537px;width:50px;height:17px;border:1px solid #ababab;border-radius:4px;background:linear-gradient(#fdfdfd,#e3e3e3);box-sizing:border-box"></div>
<div class="t" style="left:38px;width:400px;text-align:center;top:535px;font-size:11.7px;">Skip</div>
<svg class="a" style="left:264px;top:539px" width="13" height="12" viewBox="0 0 13 12"><path d="M1 6.5L4.5 10.5L12 1" fill="none" stroke="#c8c8c8" stroke-width="2.2"/></svg>
<div class="a" style="left:280px;top:537px;width:50px;height:17px;border:1px solid #ababab;border-radius:4px;background:linear-gradient(#fdfdfd,#e3e3e3);box-sizing:border-box"></div>
<div class="t" style="left:105px;width:400px;text-align:center;top:535px;font-size:11.7px;">Skip</div>
<svg class="a" style="left:331px;top:539px" width="13" height="12" viewBox="0 0 13 12"><path d="M1 6.5L4.5 10.5L12 1" fill="none" stroke="#c8c8c8" stroke-width="2.2"/></svg>
<div class="a" style="left:346px;top:537px;width:50px;height:17px;border:1px solid #ababab;border-radius:4px;background:linear-gradient(#fdfdfd,#e3e3e3);box-sizing:border-box"></div>
<div class="t" style="left:171px;width:400px;text-align:center;top:535px;font-size:11.7px;">Skip</div>
<svg class="a" style="left:397px;top:539px" width="13" height="12" viewBox="0 0 13 12"><path d="M1 6.5L4.5 10.5L12 1" fill="none" stroke="#c8c8c8" stroke-width="2.2"/></svg>
<div class="a" style="left:413px;top:537px;width:50px;height:17px;border:1px solid #ababab;border-radius:4px;background:linear-gradient(#fdfdfd,#e3e3e3);box-sizing:border-box"></div>
<div class="t" style="left:238px;width:400px;text-align:center;top:535px;font-size:11.7px;">Skip</div>
<svg class="a" style="left:464px;top:539px" width="13" height="12" viewBox="0 0 13 12"><path d="M1 6.5L4.5 10.5L12 1" fill="none" stroke="#c8c8c8" stroke-width="2.2"/></svg>
<div class="a" style="left:480px;top:537px;width:50px;height:17px;border:1px solid #ababab;border-radius:4px;background:linear-gradient(#fdfdfd,#e3e3e3);box-sizing:border-box"></div>
<div class="t" style="left:305px;width:400px;text-align:center;top:535px;font-size:11.7px;">Yes</div>
<svg class="a" style="left:531px;top:539px" width="13" height="12" viewBox="0 0 13 12"><path d="M1 6.5L4.5 10.5L12 1" fill="none" stroke="#1aa04a" stroke-width="2.4"/></svg>
<div class="a" style="left:546px;top:537px;width:50px;height:17px;border:1px solid #ababab;border-radius:4px;background:linear-gradient(#fdfdfd,#e3e3e3);box-sizing:border-box"></div>
<div class="t" style="left:371px;width:400px;text-align:center;top:535px;font-size:11.7px;">28-07-23</div>
<svg class="a" style="left:597px;top:539px" width="13" height="12" viewBox="0 0 13 12"><path d="M1 6.5L4.5 10.5L12 1" fill="none" stroke="#1aa04a" stroke-width="2.4"/></svg>
<div class="a" style="left:613px;top:537px;width:50px;height:17px;border:1px solid #ababab;border-radius:4px;background:linear-gradient(#fdfdfd,#e3e3e3);box-sizing:border-box"></div>
<div class="t" style="left:438px;width:400px;text-align:center;top:535px;font-size:11.7px;">28-07-23</div>
<svg class="a" style="left:664px;top:539px" width="13" height="12" viewBox="0 0 13 12"><path d="M1 6.5L4.5 10.5L12 1" fill="none" stroke="#1aa04a" stroke-width="2.4"/></svg>
<div class="a" style="left:680px;top:537px;width:50px;height:17px;border:1px solid #ababab;border-radius:4px;background:linear-gradient(#fdfdfd,#e3e3e3);box-sizing:border-box"></div>
<svg class="a" style="left:732px;top:539px" width="12" height="12" viewBox="0 0 12 12"><path d="M1.5 1.5L10.5 10.5M10.5 1.5L1.5 10.5" stroke="#d0312d" stroke-width="3"/></svg>
<svg class="a" style="left:32px;top:488px" width="29" height="36" viewBox="0 0 29 36"><rect x="0" y="0" width="28.5" height="35.5" rx="3.5" fill="#505050"/><rect x="2.6" y="3" width="23" height="6.5" fill="#8cc65a"/><rect x="19.5" y="5.2" width="1.8" height="1.8" fill="#3b5e2b"/><rect x="22.5" y="5.2" width="1.8" height="1.8" fill="#3b5e2b"/><rect x="2.6" y="13.9" width="4.4" height="3.5" fill="#e6e6e6"/><rect x="8.6" y="13.9" width="4.4" height="3.5" fill="#e6e6e6"/><rect x="14.6" y="13.9" width="4.4" height="3.5" fill="#e6e6e6"/><rect x="20.6" y="13.9" width="4.4" height="3.5" fill="#e84a4a"/><rect x="2.6" y="19.1" width="4.4" height="3.5" fill="#e6e6e6"/><rect x="8.6" y="19.1" width="4.4" height="3.5" fill="#e6e6e6"/><rect x="14.6" y="19.1" width="4.4" height="3.5" fill="#e6e6e6"/><rect x="20.6" y="19.1" width="4.4" height="3.5" fill="#b8b8b8"/><rect x="2.6" y="24.3" width="4.4" height="3.5" fill="#e6e6e6"/><rect x="8.6" y="24.3" width="4.4" height="3.5" fill="#e6e6e6"/><rect x="14.6" y="24.3" width="4.4" height="3.5" fill="#e6e6e6"/><rect x="20.6" y="24.3" width="4.4" height="3.5" fill="#b8b8b8"/><rect x="2.6" y="29.5" width="4.4" height="3.5" fill="#e6e6e6"/><rect x="8.6" y="29.5" width="4.4" height="3.5" fill="#e6e6e6"/><rect x="14.6" y="29.5" width="4.4" height="3.5" fill="#e6e6e6"/><rect x="20.6" y="29.5" width="4.4" height="3.5" fill="#b8b8b8"/></svg>
<svg class="a" style="left:94px;top:488px" width="35" height="39" viewBox="0 0 35 39"><path d="M3 0H34.5V34Q34.5 38.5 30 38.5H3Z" fill="#c5cae9"/><path d="M0 29H27V34Q27 38.5 30 38.5H4Q0 38.5 0 34Z" fill="#4a56a6"/><rect x="7" y="8" width="3" height="3" fill="#7f89c8"/><rect x="13" y="8" width="17" height="3" fill="#7f89c8"/><rect x="7" y="14" width="3" height="3" fill="#7f89c8"/><rect x="13" y="14" width="17" height="3" fill="#7f89c8"/><rect x="7" y="20" width="3" height="3" fill="#7f89c8"/><rect x="13" y="20" width="17" height="3" fill="#7f89c8"/></svg>
<svg class="a" style="left:150px;top:482px" width="55" height="48" viewBox="0 0 55 48"><path d="M7 40.6H34" stroke="#8aa0b0" stroke-width="2.1"/><path d="M8 36C12 29 19 18 21 11C22 6.5 19 5 16.5 6C11 8 7 15 7.3 21C7.5 27 9.5 31 13 31.2C17 31.5 22 30 25 28.8C23 25 23 20 25 17C27 14 30 12.5 31.8 15C33 17.5 31 23 28 27C27 28 26 28.5 25.5 29C30 28 34 23 37.5 20C38.5 19.5 38.8 21 38.6 24C38.5 27 39 27 40.5 25.5C43 23 45.5 21 48.3 20.5" fill="none" stroke="#1f5fb5" stroke-width="2.3" stroke-linecap="round" stroke-linejoin="round"/><circle cx="41.8" cy="36" r="8.8" fill="#4caf50"/><path d="M37.5 36.3L41 39.5L47.3 32.8" fill="none" stroke="#d8e88c" stroke-width="2.1"/></svg>
<svg class="a" style="left:550px;top:482px" width="55" height="48" viewBox="0 0 55 48"><path d="M7 40.6H34" stroke="#8aa0b0" stroke-width="2.1"/><path d="M8 36C12 29 19 18 21 11C22 6.5 19 5 16.5 6C11 8 7 15 7.3 21C7.5 27 9.5 31 13 31.2C17 31.5 22 30 25 28.8C23 25 23 20 25 17C27 14 30 12.5 31.8 15C33 17.5 31 23 28 27C27 28 26 28.5 25.5 29C30 28 34 23 37.5 20C38.5 19.5 38.8 21 38.6 24C38.5 27 39 27 40.5 25.5C43 23 45.5 21 48.3 20.5" fill="none" stroke="#1f5fb5" stroke-width="2.3" stroke-linecap="round" stroke-linejoin="round"/><circle cx="41.8" cy="36" r="8.8" fill="#0bb04e"/><path d="M37.5 36.3L41 39.5L47.3 32.8" fill="none" stroke="#d8e88c" stroke-width="2.1"/></svg>
<svg class="a" style="left:225px;top:486px" width="42" height="42" viewBox="0 0 42 42"><polygon points="21.00,0.00 25.74,3.32 31.50,2.81 33.94,8.06 39.19,10.50 38.68,16.26 42.00,21.00 38.68,25.74 39.19,31.50 33.94,33.94 31.50,39.19 25.74,38.68 21.00,42.00 16.26,38.68 10.50,39.19 8.06,33.94 2.81,31.50 3.32,25.74 0.00,21.00 3.32,16.26 2.81,10.50 8.06,8.06 10.50,2.81 16.26,3.32" fill="#8bc34a"/><path d="M10.5 20.2L18.5 27.7L33 13.2" fill="none" stroke="#d3e69a" stroke-width="3.6"/></svg>
<svg class="a" style="left:293px;top:486px" width="49" height="42" viewBox="0 0 49 42"><path d="M0.8 12L5.5 6.2H33.5L37.5 12Z" fill="#8d5524"/><path d="M6.5 12L11.5 1.5L26 12Z" fill="#b3e5fc"/><path d="M16 7L23 3.5L34 12H22Z" fill="#7fd1f5"/><path d="M25 9L28.5 6.5L35 12H29Z" fill="#4fc3f7"/><rect x="1" y="11.5" width="36.5" height="28.5" rx="1.5" fill="#f7941d"/><rect x="14.5" y="16" width="9" height="2.8" rx="1.4" fill="#8d5524"/><rect x="6" y="27" width="3.6" height="8" fill="#2a6ab8"/><rect x="12" y="27" width="3.6" height="8" fill="#2a6ab8"/><rect x="18" y="27" width="3.6" height="8" fill="#2a6ab8"/><rect x="24" y="27" width="10" height="8" fill="#2a6ab8"/><path d="M34 20L48 31L34 42Z" fill="#2a6ab8"/></svg>
<svg class="a" style="left:353px;top:490px" width="49" height="38" viewBox="0 0 49 38"><path d="M6.5 1H28.5Q30.3 1 30.3 2.8V28H9Q4.2 28 4.2 25V4Z" fill="#9c77b9"/><path d="M0 3H20M0 8.2H16M0 13.5H12M0 17.4H9" stroke="#8a5db3" stroke-width="1.9"/><path d="M30.3 6H41L48.5 14.5V28H30.3Z" fill="#ffc20e"/><path d="M33.5 8.5H40L45.5 14.5V17.5H33.5Z" fill="#37505c"/><circle cx="16.2" cy="28.2" r="4.9" fill="#263a44"/><circle cx="16.2" cy="28.2" r="2.5" fill="#7e99a6"/><circle cx="39.4" cy="28.2" r="4.9" fill="#263a44"/><circle cx="39.4" cy="28.2" r="2.5" fill="#7e99a6"/></svg>
<svg class="a" style="left:425px;top:488px" width="41" height="39" viewBox="0 0 41 39"><rect x="7.3" y="0" width="26.4" height="11" fill="#92c8f0"/><rect x="5.2" y="7.6" width="2.4" height="3" fill="#3d3d3d"/><rect x="33.4" y="7.6" width="2.4" height="3" fill="#3d3d3d"/><rect x="0" y="10" width="41" height="22.5" rx="4" fill="#555555"/><rect x="0" y="20" width="41" height="12.5" rx="4" fill="#3f3f3f"/><rect x="5" y="22" width="31" height="3" fill="#2b2b2b"/><circle cx="36" cy="14.5" r="1" fill="#4caf50"/><rect x="7.3" y="24.5" width="26.4" height="14" fill="#92c8f0"/><path d="M11 30H29M11 34H24" stroke="#2a72c0" stroke-width="2"/></svg>
<svg class="a" style="left:491px;top:491.5px" width="49" height="36" viewBox="0 0 49 36"><rect x="0" y="0" width="42" height="31.5" fill="#c5cae9"/><rect x="7" y="3.5" width="28" height="2" fill="#3f51b5"/><rect x="3" y="8" width="37" height="15" fill="#9fa8da"/><rect x="5" y="10" width="5" height="5" fill="#e8eaf6"/><rect x="12" y="10" width="18" height="5" fill="#e8eaf6"/><rect x="32" y="10" width="6" height="5" fill="#e8eaf6"/><rect x="5" y="17" width="5" height="4.5" fill="#e8eaf6"/><rect x="12" y="17" width="18" height="4.5" fill="#e8eaf6"/><rect x="32" y="17" width="6" height="4.5" fill="#e8eaf6"/><rect x="28" y="27" width="6" height="2" fill="#3f51b5"/><circle cx="39.5" cy="26.5" r="8.7" fill="#4caf50"/><text x="39.5" y="31.5" font-size="13" font-weight="bold" text-anchor="middle" fill="#fff" font-family="Liberation Sans">$</text></svg>
<svg class="a" style="left:624px;top:491.5px" width="49" height="36" viewBox="0 0 49 36"><rect x="0" y="0" width="42" height="31.5" fill="#c5cae9"/><rect x="7" y="3.5" width="28" height="2" fill="#3f51b5"/><rect x="3" y="8" width="37" height="15" fill="#9fa8da"/><rect x="5" y="10" width="5" height="5" fill="#e8eaf6"/><rect x="12" y="10" width="18" height="5" fill="#e8eaf6"/><rect x="32" y="10" width="6" height="5" fill="#e8eaf6"/><rect x="5" y="17" width="5" height="4.5" fill="#e8eaf6"/><rect x="12" y="17" width="18" height="4.5" fill="#e8eaf6"/><rect x="32" y="17" width="6" height="4.5" fill="#e8eaf6"/><rect x="28" y="27" width="6" height="2" fill="#3f51b5"/><circle cx="39.5" cy="26.5" r="8.8" fill="#0bb04e"/><path d="M35 26.5L38.5 30L44 23.5" fill="none" stroke="#d5e88e" stroke-width="2.2"/></svg>
<svg class="a" style="left:690px;top:486px" width="43" height="40" viewBox="0 0 43 40"><path d="M1 13.5L34.5 1L42 19L9 31.5Z" fill="#1e6b2a"/><path d="M7 14L32 4.5L37 17L12 26.5Z" fill="#81c784"/><ellipse cx="22" cy="16" rx="5.5" ry="4.5" fill="#1e6b2a"/><circle cx="30.5" cy="10" r="1.8" fill="#1e6b2a"/><rect x="5" y="19" width="37.5" height="20" fill="#388e3c"/><path d="M8 21.5H37.5L40 25V33L37.5 36.5H8L5.5 33V25Z" fill="#a5d6a7"/><ellipse cx="23.5" cy="29" rx="6.5" ry="6" fill="#388e3c"/><circle cx="12" cy="29" r="2" fill="#388e3c"/><circle cx="35" cy="29" r="2" fill="#388e3c"/></svg>
<div class="a" style="left:791px;top:469px;font-weight:bold;color:#ec1c24;font-size:18px;line-height:23.5px;white-space:nowrap">There is a difference 1 between default amount in<br>header and total default amount in entry lines. Thus,<br>calculation difference GL is created.</div>
<div class="a" style="left:1252px;top:462px;width:79px;height:21px;border:1px solid #f5a623;border-radius:4px;background:#fff;box-sizing:border-box"></div>
<div class="t" style="left:1091px;width:400px;text-align:center;top:462px;font-size:11.5px;"><u>N</u>et</div>
<div class="a" style="left:1252px;top:486px;width:79px;height:21px;border:1px solid #f5a623;border-radius:4px;background:#fff;box-sizing:border-box"></div>
<div class="t" style="left:1091px;width:400px;text-align:center;top:486px;font-size:11.5px;"><u>T</u>axes</div>
<div class="a" style="left:1252px;top:510px;width:79px;height:21px;border:1px solid #d8d8d8;border-radius:4px;background:#e9e9e9;box-sizing:border-box"></div>
<div class="t" style="left:1091px;width:400px;text-align:center;top:510px;font-size:11.5px;color:#8a8a8a">Tota<u>l</u></div>
<div class="t" style="left:1124px;width:400px;text-align:right;top:460px;font-size:11.6px;font-weight:bold">1,855 JPY</div>
<div class="t" style="left:1124px;width:400px;text-align:right;top:484px;font-size:11.6px;font-weight:bold">185 JPY</div>
<div class="t" style="left:1124px;width:400px;text-align:right;top:508px;font-size:11.6px;font-weight:bold">2,040 JPY</div>
<div class="a" style="left:1391px;top:457px;width:139px;height:25px;border:3px solid #e3141f;box-sizing:border-box"></div>
<div class="a" style="left:1423px;top:570px;width:53px;height:38px;border:1px solid #f5a623;border-radius:4px;background:#fff;box-sizing:border-box"></div>
<svg class="a" style="left:1441px;top:574px" width="12" height="12" viewBox="0 0 12 12"><rect x="0.7" y="0.7" width="10.6" height="10.6" fill="none" stroke="#555" stroke-width="1.2"/><rect x="2.5" y="2.5" width="4" height="4" fill="none" stroke="#555"/><rect x="5" y="5" width="4" height="4" fill="#fff" stroke="#555"/></svg>
<div class="t" style="left:1249px;width:400px;text-align:center;top:587px;font-size:11.5px;"><u>G</u>roup</div>
<div class="a" style="left:1479px;top:570px;width:53px;height:38px;border:1px solid #f5a623;border-radius:4px;background:#fff;box-sizing:border-box"></div>
<svg class="a" style="left:1497px;top:574px" width="12" height="12" viewBox="0 0 12 12"><path d="M1.5 1.5L10.5 10.5M10.5 1.5L1.5 10.5" stroke="#c0392b" stroke-width="3"/></svg>
<div class="t" style="left:1305px;width:400px;text-align:center;top:587px;font-size:11.5px;"><u>C</u>lose</div>
<div class="a" style="left:2px;top:611px;width:497px;height:1px;background:#a0a0a0"></div>
<div class="a" style="left:502px;top:611px;width:858px;height:1px;background:#a0a0a0"></div>
<div class="a" style="left:1363px;top:611px;width:48px;height:1px;background:#a0a0a0"></div>
<div class="a" style="left:1414px;top:611px;width:119px;height:1px;background:#a0a0a0"></div>
<div class="a" style="left:502px;top:611px;width:1px;height:3px;background:#a0a0a0"></div>
<div class="a" style="left:1363px;top:611px;width:1px;height:3px;background:#a0a0a0"></div>
<div class="a" style="left:1414px;top:611px;width:1px;height:3px;background:#a0a0a0"></div>
<div class="a" style="left:507px;top:613px;width:7px;height:1px;background:#000"></div>
</body></html>
